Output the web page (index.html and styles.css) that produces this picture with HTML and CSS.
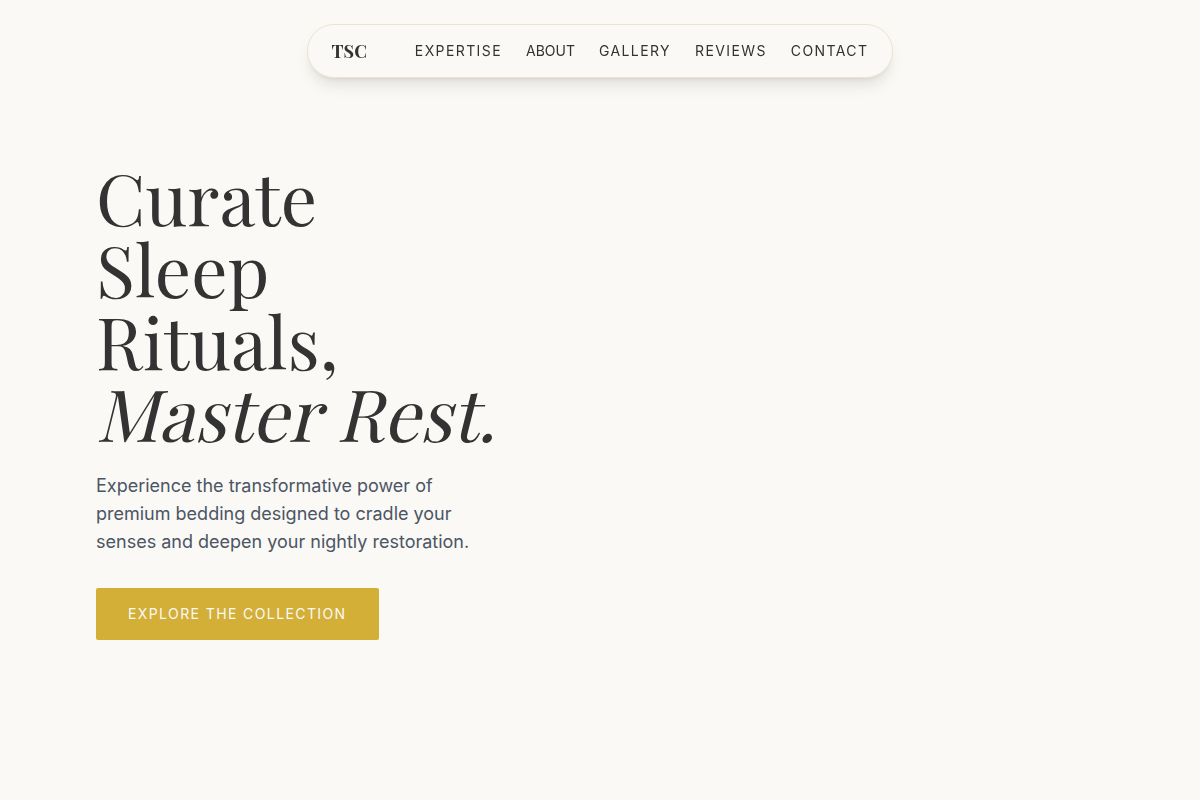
FILE: index.html
```
<!DOCTYPE html>
<html lang="en">
<head>
<meta charset="utf-8">
<meta name="viewport" content="width=device-width, initial-scale=1">
<title>TSC</title>
<link rel="stylesheet" href="styles.css">
</head>
<body>
<header class="header">
  <nav class="nav" aria-label="Main">
    <a class="brand" href="#">TSC</a>
    <ul class="links">
      <li><a class="link" href="#expertise">EXPERTISE</a></li>
      <li><a class="link link-tight" href="#about">ABOUT</a></li>
      <li><a class="link" href="#gallery">GALLERY</a></li>
      <li><a class="link" href="#reviews">REVIEWS</a></li>
      <li><a class="link" href="#contact">CONTACT</a></li>
    </ul>
  </nav>
</header>
<main class="hero">
  <div class="copy">
    <h1 class="title">Curate<br>Sleep<br>Rituals,<br><em class="slant">Master Rest.</em></h1>
    <p class="lead">Experience the transformative power of premium bedding designed to cradle your senses and deepen your nightly restoration.</p>
    <a class="cta" href="#collection">EXPLORE THE COLLECTION</a>
  </div>
</main>
</body>
</html>
```
FILE: styles.css
```
* { box-sizing: border-box; }
body {
  margin: 0;
  background: #faf9f6;
  color: #333;
  font-family: Inter, sans-serif;
}
a { color: inherit; text-decoration: none; }
.header {
  position: fixed;
  top: 24px;
  left: 0;
  right: 0;
  display: flex;
  justify-content: center;
}
.nav {
  display: flex;
  align-items: center;
  gap: 48px;
  padding: 12px 24px;
  border: 1px solid #ece3c9;
  border-radius: 27px;
  box-shadow: 0 10px 15px -3px rgba(0, 0, 0, 0.1), 0 4px 6px -4px rgba(0, 0, 0, 0.1);
  background: #faf9f6;
}
.brand {
  font-family: "Playfair Display", "Liberation Serif", serif;
  font-size: 18px;
  line-height: 28px;
  font-weight: 700;
}
.links {
  display: flex;
  gap: 24px;
  margin: 0;
  padding: 0;
  list-style: none;
  font-size: 14px;
  line-height: 20px;
}
.link { letter-spacing: 1.4px; }
.link-tight { letter-spacing: normal; }
.hero {
  display: flex;
  align-items: center;
  min-height: 100vh;
  padding: 0 96px;
}
.copy {
  display: flex;
  flex-direction: column;
  align-items: flex-start;
  max-width: 400px;
}
.title {
  margin: 0 0 24px;
  font-family: "Playfair Display", "Liberation Serif", serif;
  font-size: 72px;
  line-height: 72px;
  font-weight: 400;
  white-space: nowrap;
}
/* Slanted roman, pivoting on the baseline */
.slant {
  display: inline-block;
  font-style: normal;
  transform: skewX(-14deg);
  transform-origin: 0 90%;
}
.lead {
  margin: 0 0 32px;
  color: #4b5563;
  font-size: 18px;
  line-height: 28px;
}
.cta {
  padding: 16px 32px;
  border-radius: 2px;
  background: #d4af37;
  color: #faf9f6;
  font-size: 14px;
  line-height: 20px;
  letter-spacing: 1.4px;
}
```
